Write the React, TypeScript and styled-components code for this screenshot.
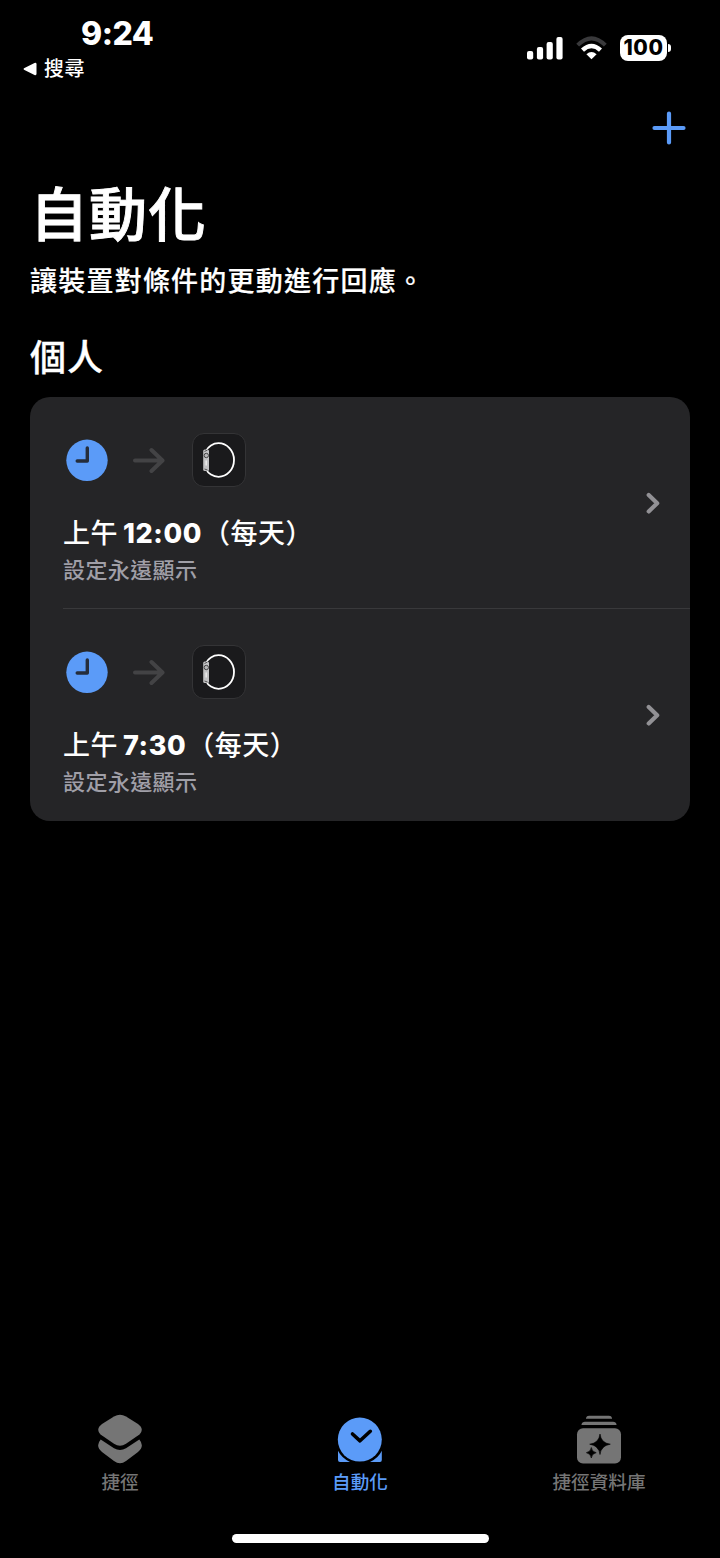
import React from "react";
import styled, { createGlobalStyle } from "styled-components";

const GlobalStyle = createGlobalStyle`
  * { box-sizing: border-box; }
  html, body { margin: 0; padding: 0; background: #000; }
  body {
    font-family: Inter, "Noto Sans CJK TC", sans-serif;
    font-weight: 500;
    color: #fff;
  }
  svg { display: block; }
`;

const blue = "#5b9bf8";
const gray = "#757575";

const Screen = styled.div`
  width: 720px;
  height: 1558px;
  display: flex;
  flex-direction: column;
  background: #000;
  overflow: hidden;
`;

const StatusBar = styled.header`
  height: 90px;
  display: flex;
  justify-content: space-between;
  padding: 0 49px 0 23px;
`;

const StatusLeft = styled.div`
  display: flex;
  flex-direction: column;
`;

const Time = styled.time`
  margin: 14px 0 0 58px;
  font-size: 32px;
  font-weight: 800;
  line-height: 40px;
  letter-spacing: -0.5px;
`;

const BackLink = styled.div`
  display: flex;
  align-items: center;
  gap: 7px;
  height: 30px;
  font-size: 20px;
  line-height: 30px;
  letter-spacing: 0.5px;
`;

const StatusIcons = styled.div`
  display: flex;
  align-items: center;
  height: 26px;
  margin-top: 35px;
`;

const WifiSlot = styled.div`
  margin: 0 13px 0 12px;
`;

const Battery = styled.div`
  width: 47px;
  height: 26px;
  border-radius: 8px;
  background: #fff;
  color: #000;
  font-size: 21px;
  font-weight: 800;
  line-height: 26px;
  letter-spacing: 0.5px;
  text-align: center;
`;

const BatteryTip = styled.div`
  width: 3px;
  height: 8px;
  margin: 0 0 0 1px;
  border-radius: 0 3px 3px 0;
  background: #fff;
`;

const NavBar = styled.nav`
  height: 75px;
  display: flex;
  justify-content: flex-end;
  align-items: center;
  padding-right: 34px;
`;

const Content = styled.main`
  flex: 1;
  padding: 0 30px;
`;

const Title = styled.h1`
  margin: 2px 0 0;
  height: 95px;
  font-size: 58px;
  font-weight: 500;
  line-height: 97px;
  letter-spacing: 1px;
  -webkit-text-stroke: 0.9px #fff;
`;

const Subtitle = styled.p`
  margin: 0;
  height: 40px;
  font-size: 27px;
  line-height: 40px;
  letter-spacing: 1.22px;
  -webkit-text-stroke: 0.2px #fff;
`;

const SectionTitle = styled.h2`
  margin: 26px 0 0;
  height: 69px;
  font-size: 36px;
  font-weight: 500;
  line-height: 60px;
  letter-spacing: 1px;
  -webkit-text-stroke: 0.3px #fff;
`;

const Card = styled.section`
  border-radius: 20px;
  background: #252527;
  padding-left: 33px;
`;

const Row = styled.article`
  height: 212px;
  display: flex;
  align-items: center;
  justify-content: space-between;
  padding-right: 30px;
  &:not(:last-child) {
    border-bottom: 1px solid #39393b;
  }
`;

const RowBody = styled.div`
  align-self: flex-start;
  padding-top: 36px;
`;

const Flow = styled.div`
  display: flex;
  align-items: center;
  height: 54px;
  padding-left: 3px;
`;

const ArrowSlot = styled.div`
  margin: 0 27px 0 25px;
`;

const AppTile = styled.div`
  width: 54px;
  height: 54px;
  border: 1px solid #343436;
  border-radius: 12px;
  background: #1a1a1c;
`;

const RowTitle = styled.h3`
  margin: 28px 0 0;
  display: flex;
  height: 38px;
  font-size: 27px;
  font-weight: 500;
  line-height: 38px;
  letter-spacing: 0.5px;
  white-space: pre;
`;

const Digits = styled.span`
  margin: 0 1px 0 5px;
  font-weight: 800;
  letter-spacing: 0.6px;
`;

const RowNote = styled.p`
  margin: 0;
  height: 36px;
  font-size: 22px;
  font-weight: 500;
  line-height: 35px;
  letter-spacing: 0.4px;
  color: #a09fa7;
`;

const TabBar = styled.nav`
  display: grid;
  grid-template-columns: repeat(3, 1fr);
  height: 120px;
`;

const Tab = styled.div<{ $active?: boolean; $shift?: number }>`
  display: flex;
  flex-direction: column;
  align-items: center;
  padding-right: ${(p) => p.$shift ?? 0}px;
  color: ${(p) => (p.$active ? blue : gray)};
`;

const TabLabel = styled.span`
  margin-top: 2px;
  font-size: 18.6px;
  line-height: 28px;
`;

const HomeIndicator = styled.div`
  width: 257px;
  height: 9px;
  margin: 0 auto 15px;
  border-radius: 5px;
  background: #fff;
`;

const Signal = () => (
  <svg width="37" height="24" viewBox="0 0 37 24" fill="#fff">
    <rect x="0" y="15" width="6.2" height="8.5" rx="2" />
    <rect x="9.9" y="11" width="6.2" height="12.5" rx="2" />
    <rect x="19.6" y="6" width="6.2" height="17.5" rx="2" />
    <rect x="29.4" y="1" width="6.2" height="22.5" rx="2" />
  </svg>
);

const Wifi = () => (
  <svg width="31" height="24" viewBox="0 0 31 24" fill="none">
    <path d="M1.7 9.2Q15.5 -4.6 29.3 9.2" stroke="#39393b" strokeWidth="4" />
    <path d="M6.5 14.2Q15.5 5.8 24.5 14.2" stroke="#fff" strokeWidth="4.4" />
    <path d="M10.4 18.2Q15.5 14 20.6 18.2L15.5 23.3Z" fill="#fff" />
  </svg>
);

const Clock = () => (
  <svg width="42" height="42" viewBox="0 0 42 42">
    <circle cx="21" cy="21.3" r="20.7" fill={blue} />
    <path d="M21.3 9v13H11.2" fill="none" stroke="#252d3b" strokeWidth="3.4" strokeLinecap="round" strokeLinejoin="round" />
  </svg>
);

const Arrow = () => (
  <svg width="32" height="28" viewBox="0 0 32 28" fill="none" stroke="#434345" strokeWidth="4" strokeLinecap="round" strokeLinejoin="round">
    <path d="M2 14.5H29M18.5 4L29.5 14.5L18.5 25" />
  </svg>
);

const Watch = () => (
  <svg width="52" height="52" viewBox="0 0 52 52" fill="none">
    <path d="M13 17C15 12.5 20 9.2 25.5 9.2C34 9.2 41 16.5 41 26C41 35.5 34 42.8 25.5 42.8C20 42.8 15 39.5 13 35" stroke="#fff" strokeWidth="1.8" />
    <rect x="10.2" y="15.5" width="5.8" height="21.5" rx="1.5" fill="#c2c2c4" />
    <circle cx="13.3" cy="21.5" r="2.2" fill="#b5b5b7" stroke="#444" />
    <path d="M13.2 26.5v5" stroke="#e9e9e9" strokeWidth="1.6" />
    <path d="M11.5 17.5l3-1.5M11.5 35l3 1" stroke="#555" />
  </svg>
);

const Chevron = () => (
  <svg width="14" height="22" viewBox="0 0 14 22" fill="none" stroke="#929195" strokeWidth="4.2" strokeLinecap="round" strokeLinejoin="round">
    <path d="M2.7 3L11.2 11.2L2.7 19.4" />
  </svg>
);

const ShortcutsIcon = () => (
  <svg width="46" height="52" viewBox="0 0 46 52" fill="currentColor">
    <path d="M17 2.6Q23 -.9 29 2.6L41 10Q48.500 15.500 41 21.500L29 29.800Q23 33.500 17 29.800L5 21.500Q-2.500 15.500 5 10Z" />
    <path d="M3.7 25.5L17 34.200Q23 37.800 29 34.200L42.300 25.500Q48 32 41 38L29 47Q23 51.500 17 47L5 38Q-2 32 3.7 25.5Z" />
  </svg>
);

const AutomationIcon = () => (
  <svg width="46" height="52" viewBox="0 0 46 52" fill="currentColor">
    <circle cx="22.8" cy="25.6" r="22" />
    <path d="M1 36.800Q4.500 44 13 48H3Q1 48 1 46Z" />
    <path d="M44.800 36.800Q41.500 44 33 48H43Q44.800 48 44.800 46Z" />
    <path d="M15.500 19.700L23 26.500L33.300 17" fill="none" stroke="#000" strokeWidth="3.6" strokeLinecap="round" strokeLinejoin="round" transform="translate(0 .3)" />
  </svg>
);

const GalleryIcon = () => (
  <svg width="46" height="52" viewBox="0 0 46 52" fill="currentColor">
    <path d="M10 4Q10.5 1.700 13 1.700H33Q35.5 1.700 36 4V4.800H10Z" />
    <path d="M5.500 10.500Q6 7.800 9 7.800H37Q40 7.800 40.500 10.500V11H5.500Z" />
    <rect x="1" y="14.200" width="44" height="35.200" rx="6" />
    <path d="M24 20Q25 29 34.300 30.200Q25 31.500 24 40.500Q23 31.500 13.700 30.200Q23 29 24 20Z" fill="#000" stroke="#000" strokeWidth=".6" />
    <path d="M15.300 33.500Q15.800 37.800 20.200 38.700Q15.800 39.500 15.300 44Q14.800 39.500 10.400 38.700Q14.800 37.800 15.300 33.500Z" fill="#000" stroke="#000" strokeWidth=".6" />
  </svg>
);

const BackTriangle = () => (
  <svg width="14" height="14" viewBox="0 0 14 14" fill="#fff">
    <path d="M1 6.200L11.500 .9Q13.500 .2 13.500 2.200V11.800Q13.500 13.800 11.500 13.100L1 7.800Q0 7 1 6.200Z" />
  </svg>
);

const automations = [
  { time: "12:00", note: "設定永遠顯示" },
  { time: "7:30", note: "設定永遠顯示" },
];

export default function App() {
  return (
    <Screen>
      <GlobalStyle />
      <StatusBar>
        <StatusLeft>
          <Time>9:24</Time>
          <BackLink>
            <BackTriangle />
            搜尋
          </BackLink>
        </StatusLeft>
        <StatusIcons>
          <Signal />
          <WifiSlot>
            <Wifi />
          </WifiSlot>
          <Battery>100</Battery>
          <BatteryTip />
        </StatusIcons>
      </StatusBar>
      <NavBar>
        <svg width="34" height="34" viewBox="0 0 34 34" stroke={blue} strokeWidth="4.2" strokeLinecap="round">
          <path d="M17 2.5V31.5M2.5 17H31.5" />
        </svg>
      </NavBar>
      <Content>
        <Title>自動化</Title>
        <Subtitle>讓裝置對條件的更動進行回應。</Subtitle>
        <SectionTitle>個人</SectionTitle>
        <Card>
          {automations.map((item) => (
            <Row key={item.time}>
              <RowBody>
                <Flow>
                  <Clock />
                  <ArrowSlot>
                    <Arrow />
                  </ArrowSlot>
                  <AppTile>
                    <Watch />
                  </AppTile>
                </Flow>
                <RowTitle>
                  上午<Digits>{item.time}</Digits>（每天）
                </RowTitle>
                <RowNote>{item.note}</RowNote>
              </RowBody>
              <Chevron />
            </Row>
          ))}
        </Card>
      </Content>
      <TabBar>
        <Tab>
          <ShortcutsIcon />
          <TabLabel>捷徑</TabLabel>
        </Tab>
        <Tab $active>
          <AutomationIcon />
          <TabLabel>自動化</TabLabel>
        </Tab>
        <Tab $shift={2}>
          <GalleryIcon />
          <TabLabel>捷徑資料庫</TabLabel>
        </Tab>
      </TabBar>
      <HomeIndicator />
    </Screen>
  );
}
